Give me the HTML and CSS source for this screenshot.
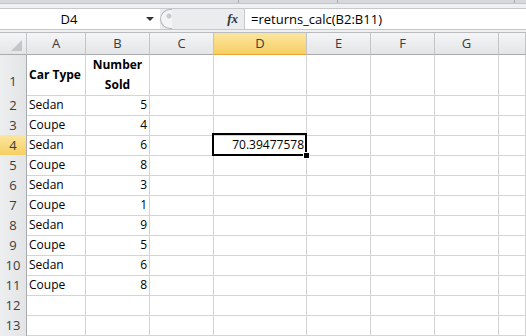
FILE: index.html
```html
<!DOCTYPE html>
<html lang="en">

<head>
    <meta charset="UTF-8">
    <title>Book1 - Excel</title>
    <link rel="stylesheet" href="styles.css">
</head>

<body>

    <!-- Ribbon edge -->
    <div class="ribbon-edge">
        <span class="tick t1"></span>
        <span class="tick t2"></span>
        <span class="tick t3"></span>
    </div>

    <!-- Formula Bar -->
    <div class="formula-bar">
        <div class="name-box">
            <span class="name">D4</span>
            <span class="drop"></span>
        </div>
        <div class="fx-zone">
            <span class="grip"></span>
            <span class="fx">fx</span>
        </div>
        <div class="formula">=returns_calc(B2:B11)</div>
    </div>

    <!-- Sheet -->
    <div class="sheet">
        <div class="row head">
            <div class="corner"></div>
            <div>A</div><div>B</div><div>C</div><div class="sel">D</div><div>E</div><div>F</div><div>G</div><div></div>
        </div>
        <div class="row tall">
            <div class="num">1</div>
            <div class="bold">Car Type</div>
            <div class="bold wrap">Number<br>Sold</div>
            <div></div><div></div><div></div><div></div><div></div><div></div>
        </div>
        <div class="row">
            <div class="num">2</div><div>Sedan</div><div class="r">5</div>
            <div></div><div></div><div></div><div></div><div></div><div></div>
        </div>
        <div class="row">
            <div class="num">3</div><div>Coupe</div><div class="r">4</div>
            <div></div><div></div><div></div><div></div><div></div><div></div>
        </div>
        <div class="row">
            <div class="num sel">4</div><div>Sedan</div><div class="r">6</div>
            <div></div><div class="r active">70.39477578</div><div></div><div></div><div></div><div></div>
        </div>
        <div class="row">
            <div class="num">5</div><div>Coupe</div><div class="r">8</div>
            <div></div><div></div><div></div><div></div><div></div><div></div>
        </div>
        <div class="row">
            <div class="num">6</div><div>Sedan</div><div class="r">3</div>
            <div></div><div></div><div></div><div></div><div></div><div></div>
        </div>
        <div class="row">
            <div class="num">7</div><div>Coupe</div><div class="r">1</div>
            <div></div><div></div><div></div><div></div><div></div><div></div>
        </div>
        <div class="row">
            <div class="num">8</div><div>Sedan</div><div class="r">9</div>
            <div></div><div></div><div></div><div></div><div></div><div></div>
        </div>
        <div class="row">
            <div class="num">9</div><div>Coupe</div><div class="r">5</div>
            <div></div><div></div><div></div><div></div><div></div><div></div>
        </div>
        <div class="row">
            <div class="num">10</div><div>Sedan</div><div class="r">6</div>
            <div></div><div></div><div></div><div></div><div></div><div></div>
        </div>
        <div class="row">
            <div class="num">11</div><div>Coupe</div><div class="r">8</div>
            <div></div><div></div><div></div><div></div><div></div><div></div>
        </div>
        <div class="row">
            <div class="num">12</div><div></div><div></div>
            <div></div><div></div><div></div><div></div><div></div><div></div>
        </div>
        <div class="row">
            <div class="num">13</div><div></div><div></div>
            <div></div><div></div><div></div><div></div><div></div><div></div>
        </div>
        <div class="row">
            <div class="num"></div><div></div><div></div>
            <div></div><div></div><div></div><div></div><div></div><div></div>
        </div>
    </div>

</body>

</html>
```

FILE: styles.css
```css
body {
    font-family: "Open Sans", "Liberation Sans", sans-serif;
    font-size: 12px;
    color: #000;
    background: #eef0f2;
    margin: 0;
    overflow: hidden;
}

/* Ribbon edge */
.ribbon-edge {
    position: relative;
    height: 3px;
    background: #d6d8db;
    border-bottom: 1px solid #c4c6c9;
}

.tick {
    position: absolute;
    top: 0;
    width: 1px;
    height: 3px;
    background: #a9abae;
}

.t1 { left: 238px; }
.t2 { left: 337px; }
.t3 { left: 514px; }

/* Formula bar */
.formula-bar {
    display: flex;
    height: 20px;
    margin-top: 4px;
    border-top: 1px solid #c6c8cb;
    border-bottom: 1px solid #c6c8cb;
    background: #fff;
    font-size: 13px;
}

.name-box {
    width: 160px;
    display: flex;
    align-items: center;
    background: #fff;
}

.name {
    flex: 1;
    text-align: center;
    padding-right: 8px;
    line-height: 20px;
}

.drop {
    width: 0;
    height: 0;
    border-left: 4px solid transparent;
    border-right: 4px solid transparent;
    border-top: 4px solid #333;
    margin-right: 6px;
}

.fx-zone {
    width: 84px;
    display: flex;
    align-items: center;
    justify-content: space-between;
    background: #eaecee;
    border-right: 1px solid #c6c8cb;
}

.grip {
    width: 11px;
    height: 18px;
    border: 1px solid #b4b6b9;
    border-right: none;
    border-radius: 10px 0 0 10px;
    background: radial-gradient(circle at 8px 6px, #c9cbce 2px, #f3f4f5 3px);
}

.fx {
    font-family: "Liberation Serif", serif;
    font-style: italic;
    font-weight: bold;
    font-size: 13px;
    color: #333;
    margin-right: 6px;
}

.formula {
    flex: 1;
    padding-left: 6px;
    line-height: 20px;
}

/* Sheet */
.sheet {
    margin-top: 2px;
    border-top: 1px solid #b9bbbe;
    background: #fff;
}

.row {
    display: grid;
    grid-template-columns: 27px 59px 64px 64px 93px 64px 64px 64px 1fr;
    height: 20px;
}

.row > div {
    border-right: 1px solid #d4d4d4;
    border-bottom: 1px solid #d4d4d4;
    padding: 0 2px;
    line-height: 20px;
    white-space: nowrap;
    overflow: visible;
}

.row.head {
    height: 22px;
}

.row.head > div {
    background: linear-gradient(#f4f5f6, #e3e5e7);
    border-right: 1px solid #c2c4c7;
    border-bottom: 1px solid #a9abae;
    text-align: center;
    line-height: 21px;
    font-size: 13px;
    color: #3c3c3c;
}

.row.head > div.sel {
    background: linear-gradient(#fbe6a0, #f6cf62);
    border-bottom-color: #e8a636;
}

.row.head > .corner {
    position: relative;
}

.corner::after {
    content: "";
    position: absolute;
    right: 4px;
    bottom: 3px;
    border-left: 11px solid transparent;
    border-bottom: 11px solid #c3c5c8;
}

.row.tall {
    height: 40px;
}

.row > .num {
    background: linear-gradient(90deg, #eceef0, #e2e4e6);
    border-right: 1px solid #a9abae;
    border-bottom: 1px solid #c2c4c7;
    text-align: center;
    font-size: 13px;
    color: #3c3c3c;
    padding: 0;
}

.row.tall > .num {
    padding-top: 15px;
    line-height: 22px;
}

.row > .num.sel {
    background: linear-gradient(#fbe6a0, #f6cf62);
}

.row.tall > .bold {
    font-weight: bold;
    display: flex;
    align-items: center;
}

.row.tall > .wrap {
    justify-content: center;
    text-align: center;
    line-height: 20px;
}

.row > .r {
    text-align: right;
    padding-right: 2px;
}

/* Active cell */
.row > .active {
    position: relative;
}

.active::before {
    content: "";
    position: absolute;
    top: -2px;
    left: -2px;
    right: -1px;
    bottom: -1px;
    border: 2px solid #000;
}

.active::after {
    content: "";
    position: absolute;
    right: -4px;
    bottom: -4px;
    width: 5px;
    height: 5px;
    background: #000;
    border: 1px solid #fff;
}
```
